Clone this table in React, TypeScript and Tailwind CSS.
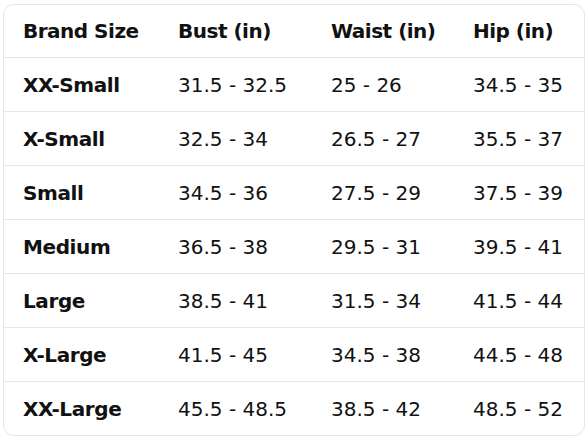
const rows = [
    ['XX-Small', '31.5 - 32.5', '25 - 26', '34.5 - 35'],
    ['X-Small', '32.5 - 34', '26.5 - 27', '35.5 - 37'],
    ['Small', '34.5 - 36', '27.5 - 29', '37.5 - 39'],
    ['Medium', '36.5 - 38', '29.5 - 31', '39.5 - 41'],
    ['Large', '38.5 - 41', '31.5 - 34', '41.5 - 44'],
    ['X-Large', '41.5 - 45', '34.5 - 38', '44.5 - 48'],
    ['XX-Large', '45.5 - 48.5', '38.5 - 42', '48.5 - 52']
]

export default function App() {
    return (
        <div className="w-[588px] h-[441px] bg-white pt-[4px] pl-[3px]">
            <div className="w-[582px] rounded-[11px] border border-[#e6e6e6] overflow-hidden text-[#111111] text-[20px]" style={{ fontFamily: '"DejaVu Sans", Arial, sans-serif' }}>
                <div className="grid grid-cols-[155px_153px_142px_1fr] h-[53px] items-center font-bold tracking-[-0.5px] border-b border-[#e6e6e6]">
                    <div className="pl-[19px]">Brand Size</div>
                    <div className="pl-[19px]">Bust (in)</div>
                    <div className="pl-[19px]">Waist (in)</div>
                    <div className="pl-[19px]">Hip (in)</div>
                </div>
                {rows.map((r, i) => (
                    <div
                        key={r[0]}
                        className={`grid grid-cols-[155px_153px_142px_1fr] items-center ${i < rows.length - 1 ? 'h-[54px] border-b border-[#e6e6e6]' : 'h-[53px]'}`}
                    >
                        <div className="pl-[19px] font-bold tracking-[-0.4px]">{r[0]}</div>
                        <div className="pl-[19px]">{r[1]}</div>
                        <div className="pl-[19px]">{r[2]}</div>
                        <div className="pl-[19px]">{r[3]}</div>
                    </div>
                ))}
            </div>
        </div>
    )
}
